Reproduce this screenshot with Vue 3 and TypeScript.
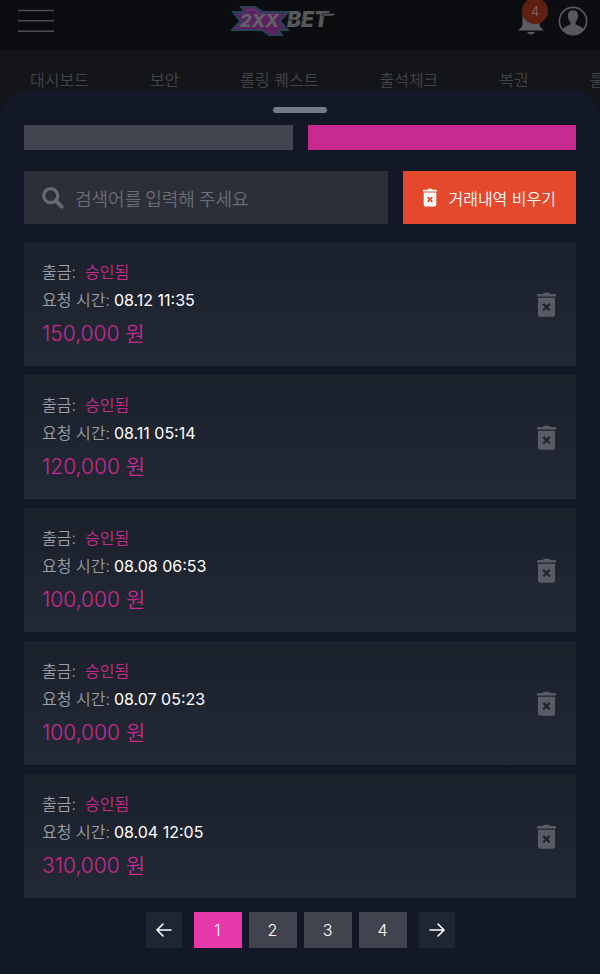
<script setup lang="ts">
import { ref } from 'vue'

interface Transaction {
  id: number
  time: string
  amount: string
}

const navItems: string[] = ['대시보드', '보안', '롤링 퀘스트', '출석체크', '복권', '룰렛']

const transactions: Transaction[] = [
  { id: 1, time: '08.12 11:35', amount: '150,000' },
  { id: 2, time: '08.11 05:14', amount: '120,000' },
  { id: 3, time: '08.08 06:53', amount: '100,000' },
  { id: 4, time: '08.07 05:23', amount: '100,000' },
  { id: 5, time: '08.04 12:05', amount: '310,000' },
]

const pages: number[] = [1, 2, 3, 4]
const currentPage = ref<number>(1)
const activeTab = ref<number>(1)
const query = ref<string>('')
</script>

<template>
  <div class="page">
    <header class="topbar">
      <button class="icon-button" type="button" aria-label="메뉴">
        <svg width="36" height="24" viewBox="0 0 36 24" fill="none" stroke="#4c4d50" stroke-width="1.6">
          <path d="M0 1.5h36M0 11.8h36M0 22.3h36" />
        </svg>
      </button>
      <a class="logo" href="#" aria-label="2XX BET">
        <svg width="106" height="32" viewBox="0 0 106 32">
          <path
            d="M0 26L9 16L1 6H13L9 1H25L33 6H61L51 16L60 26H50L54 31H39L32 26Z"
            fill="#24455a"
          />
          <path
            d="M4 24.500L12 16L5 8H16L13 2.500H24L32 8H57L48.500 16L56 24.500H46L50 29.500H40L33 24.500Z"
            fill="#5a225f"
          />
          <path d="M16 5L24 4.500L31 10H38L45 9" fill="none" stroke="#69406c" />
          <text x="10" y="22" class="logo-mark">2XX</text>
          <text x="57" y="22" class="logo-word">BET</text>
          <path d="M54 15H74M93 8.500H106L103 11H92Z" fill="#57585a" stroke="#0c0d11" stroke-width="0.600" />
        </svg>
      </a>
      <div class="account">
        <button class="icon-button bell" type="button" aria-label="알림 4">
          <svg width="26" height="30" viewBox="0 0 26 30" fill="#5c5d60">
            <path d="M13 1C8 1 4.500 5 4.500 10V18.500C4.500 20.500 2.500 22.500 0 24.500H26C23.500 22.500 21.500 20.500 21.500 18.500V10C21.500 5 18 1 13 1Z" />
            <path d="M9 26H17A4.200 3.500 0 0 1 9 26Z" />
          </svg>
          <span class="badge">4</span>
        </button>
        <button class="icon-button" type="button" aria-label="내 계정">
          <svg width="30" height="30" viewBox="0 0 30 30">
            <circle cx="15" cy="15" r="13.600" fill="none" stroke="#58595c" stroke-width="1.700" />
            <path
              d="M15 4.200C11.700 4.200 9.800 6.500 9.900 10C10 12.700 11 14.800 12.500 16V18.300L7 21C5.800 21.600 5 22.500 4.800 23.500A13 13 0 0 0 25.200 23.500C25 22.500 24.200 21.600 23 21L17.500 18.300V16C19 14.800 20 12.700 20.100 10C20.200 6.500 18.300 4.200 15 4.200Z"
              fill="#58595c"
            />
          </svg>
        </button>
      </div>
    </header>

    <nav class="nav">
      <a v-for="item in navItems" :key="item" href="#">{{ item }}</a>
    </nav>

    <main class="sheet">
      <div class="handle"></div>

      <div class="tabs">
        <button
          v-for="tab in [0, 1]"
          :key="tab"
          type="button"
          class="tab"
          :class="{ active: activeTab === tab }"
          :aria-label="tab === 0 ? '입금' : '출금'"
          @click="activeTab = tab"
        ></button>
      </div>

      <div class="tools">
        <label class="search">
          <svg width="22" height="22" viewBox="0 0 22 22" fill="none" stroke="#686a70">
            <circle cx="8.700" cy="8.700" r="7" stroke-width="3.200" />
            <path d="M14 14l5.600 5.600" stroke-width="4" stroke-linecap="round" />
          </svg>
          <input v-model="query" type="text" placeholder="검색어를 입력해 주세요" aria-label="검색어" />
        </label>
        <button class="clear" type="button">
          <svg width="14" height="19" viewBox="0 0 20 26" fill="#fff">
            <path d="M1 2H6L7.500 0.500H12.500L14 2H19Q20 2 20 3V4.500H0V3Q0 2 1 2Z" />
            <path
              fill-rule="evenodd"
              d="M1 6H19V23.500Q19 26 16.500 26H3.500Q1 26 1 23.500ZM5.700 13.200L8.300 15.800L5.700 18.400L7.400 20.100L10 17.500L12.600 20.100L14.300 18.400L11.700 15.800L14.300 13.200L12.600 11.500L10 14.100L7.400 11.500Z"
            />
          </svg>
          <span>거래내역 비우기</span>
        </button>
      </div>

      <ul class="list">
        <li v-for="item in transactions" :key="item.id" class="card">
          <div class="details">
            <p class="row"><span>출금:</span><span class="status">승인됨</span></p>
            <p class="row time"><span>요청 시간:</span><time>{{ item.time }}</time></p>
            <p class="amount">{{ item.amount }} 원</p>
          </div>
          <button class="icon-button" type="button" aria-label="삭제">
            <svg width="19" height="25" viewBox="0 0 20 26" fill="#595c65">
              <path d="M1 2H6L7.500 0.500H12.500L14 2H19Q20 2 20 3V4.500H0V3Q0 2 1 2Z" />
              <path
                fill-rule="evenodd"
                d="M1 6H19V23.500Q19 26 16.500 26H3.500Q1 26 1 23.500ZM5.700 13.200L8.300 15.800L5.700 18.400L7.400 20.100L10 17.500L12.600 20.100L14.300 18.400L11.700 15.800L14.300 13.200L12.600 11.500L10 14.100L7.400 11.500Z"
              />
            </svg>
          </button>
        </li>
      </ul>

      <nav class="pagination" aria-label="페이지">
        <button class="arrow" type="button" aria-label="이전">
          <svg width="16" height="14" viewBox="0 0 16 14">
            <path d="M15 7H1.500M7 1L1 7L7 13" />
          </svg>
        </button>
        <div class="pages">
          <button
            v-for="page in pages"
            :key="page"
            type="button"
            :class="{ current: page === currentPage }"
            @click="currentPage = page"
          >
            {{ page }}
          </button>
        </div>
        <button class="arrow" type="button" aria-label="다음">
          <svg width="16" height="14" viewBox="0 0 16 14">
            <path d="M1 7H14.500M9 1L15 7L9 13" />
          </svg>
        </button>
      </nav>
    </main>
  </div>
</template>

<style>
body {
  background: #121826;
}
</style>

<style scoped>
.page {
  min-height: 100vh;
  display: flex;
  flex-direction: column;
  overflow: hidden;
  background: #08090d;
  font-family: Inter, 'Noto Sans CJK KR', sans-serif;
  font-weight: 350;
}

button {
  margin: 0;
  padding: 0;
  border: 0;
  background: none;
  color: inherit;
  font: inherit;
  cursor: pointer;
}

a {
  color: inherit;
  text-decoration: none;
}

svg {
  display: block;
  flex: none;
}

.topbar {
  height: 50px;
  display: grid;
  grid-template-columns: 1fr auto 1fr;
  align-items: center;
  padding: 0 12px 8px 18px;
  box-sizing: border-box;
  background: #0c0d11;
}

.icon-button {
  display: flex;
}

.logo {
  padding-right: 40px;
}

.logo-mark,
.logo-word {
  font-family: Inter, sans-serif;
  font-style: italic;
  font-weight: 800;
  fill: #626068;
}

.logo-mark {
  font-size: 18px;
}

.logo-word {
  font-size: 21px;
  font-weight: 900;
  fill: #57585a;
}

.account {
  display: flex;
  justify-content: flex-end;
  align-items: center;
  gap: 14px;
}

.bell {
  position: relative;
}

.badge {
  position: absolute;
  top: -8px;
  right: -4px;
  width: 26px;
  height: 26px;
  border-radius: 50%;
  background: #611f12;
  color: #85706c;
  font-size: 13px;
  line-height: 26px;
  text-align: center;
}

.nav {
  height: 80px;
  display: flex;
  gap: 61px;
  padding: 18px 0 0 30px;
  box-sizing: border-box;
  background: #141519;
  color: #434448;
  font-size: 16px;
  line-height: 24px;
  white-space: nowrap;
}

.sheet {
  position: relative;
  flex: 1;
  margin-top: -40px;
  padding: 17px 24px 26px;
  border-radius: 28px 28px 0 0;
  background: #121826;
}

.handle {
  width: 54px;
  height: 6px;
  margin: 0 auto 12px;
  border-radius: 3px;
  background: #737985;
}

.tabs {
  display: flex;
  gap: 15px;
  margin-bottom: 21px;
}

.tab {
  flex: 1;
  height: 25px;
  background: #42454f;
}

.tab.active {
  background: #c92a8f;
}

.tools {
  display: flex;
  gap: 15px;
  height: 53px;
  margin-bottom: 18px;
}

.search {
  flex: 1;
  min-width: 0;
  display: flex;
  align-items: center;
  gap: 11px;
  padding: 0 18px;
  background: #2c2f38;
}

.search input {
  flex: 1;
  min-width: 0;
  padding: 0;
  border: 0;
  outline: 0;
  background: none;
  color: #fff;
  font-family: 'Noto Sans CJK KR', sans-serif;
  font-size: 18px;
  font-weight: inherit;
}

.search input::placeholder {
  color: #6a6e79;
  opacity: 1;
}

.clear {
  display: flex;
  align-items: center;
  gap: 11px;
  padding: 0 20px;
  background: #e4492d;
  color: #fff;
  font-size: 16px;
  white-space: nowrap;
}

.list {
  display: flex;
  flex-direction: column;
  gap: 9px;
  margin: 0 0 14px;
  padding: 0;
  list-style: none;
}

.card {
  display: flex;
  justify-content: space-between;
  align-items: center;
  height: 124px;
  padding: 0 20px 0 18px;
  box-sizing: border-box;
  background: linear-gradient(#1b212b, #222835);
}

.details {
  padding-top: 4px;
}

.details p {
  margin: 0;
}

.row {
  display: flex;
  gap: 9px;
  color: #9b9fa8;
  font-size: 16px;
  line-height: 28px;
}

.time {
  gap: 4px;
}

.time time {
  color: #fff;
  font-weight: 400;
}

.status,
.amount {
  color: #c92a8f;
}

.amount {
  font-size: 21px;
  line-height: 40px;
}

.pagination {
  display: flex;
  justify-content: center;
  gap: 12px;
}

.pages {
  display: flex;
  gap: 7px;
}

.pages button {
  width: 48px;
  height: 36px;
  background: #41444f;
  color: #fff;
  font-size: 16px;
}

.pages .current {
  background: #e638aa;
}

.arrow {
  display: flex;
  justify-content: center;
  align-items: center;
  width: 36px;
  height: 36px;
  background: #1f2633;
}

.arrow path {
  fill: none;
  stroke: #fff;
  stroke-width: 1.6;
  stroke-linecap: round;
  stroke-linejoin: round;
}
</style>
